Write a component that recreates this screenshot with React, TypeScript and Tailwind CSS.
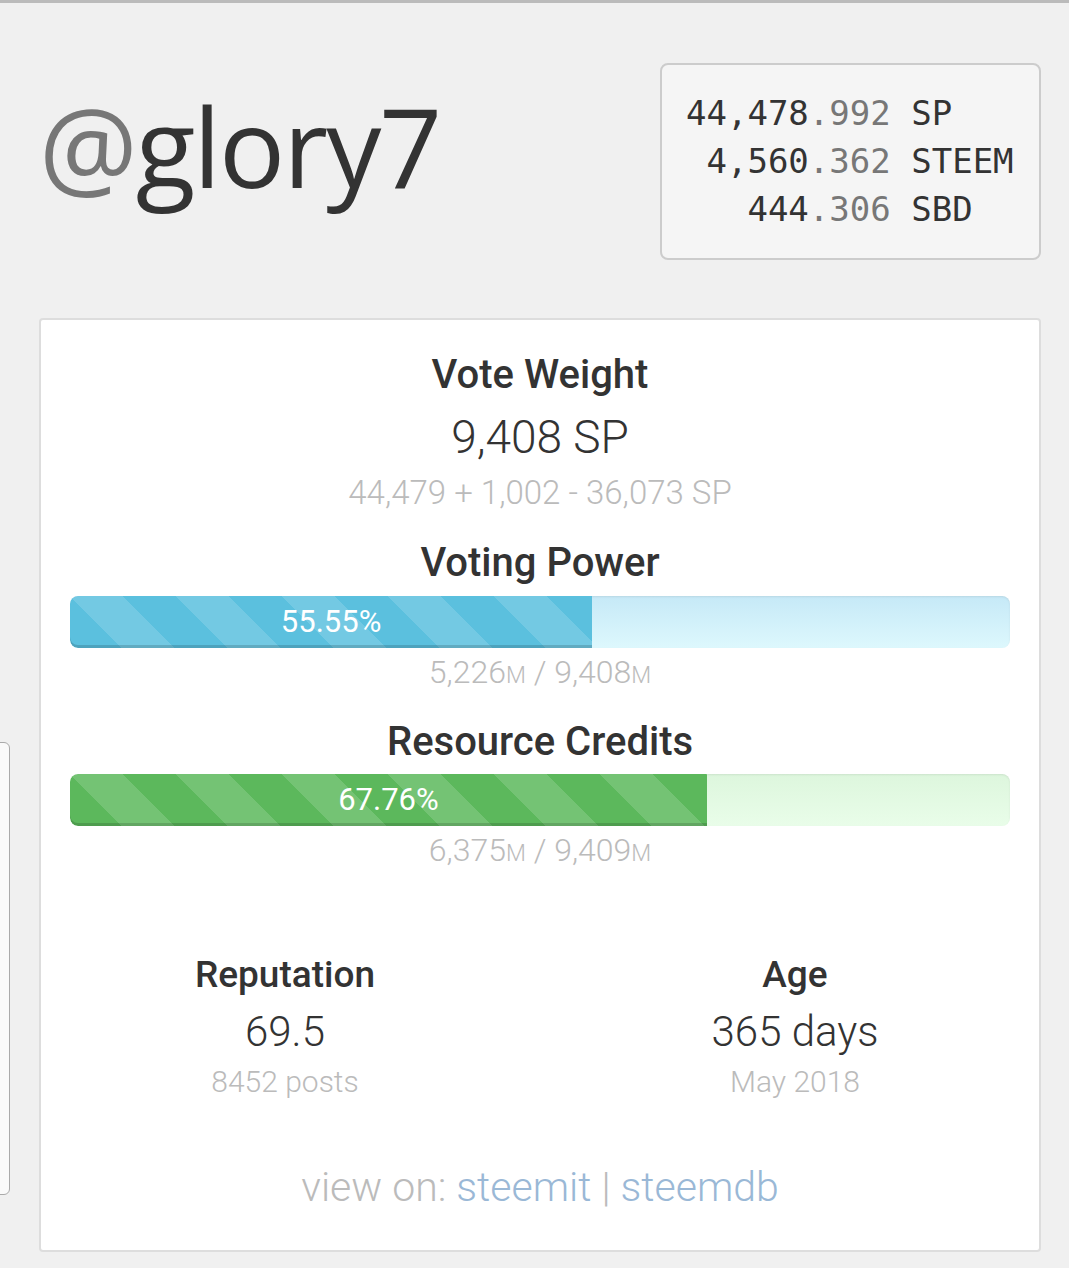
import React from 'react';

const stripes =
  'bg-[linear-gradient(45deg,rgba(255,255,255,.15)_25%,transparent_25%,transparent_50%,rgba(255,255,255,.15)_50%,rgba(255,255,255,.15)_75%,transparent_75%,transparent)] bg-[length:106px_106px]';

const Meter = ({ pct, fill, track }: { pct: number; fill: string; track: string }) => (
  <div className={`flex h-[52px] overflow-hidden rounded-[8px] shadow-[inset_0_1px_2px_rgba(0,0,0,0.08)] ${track}`}>
    <div
      className={`flex h-full items-center justify-center rounded-l-[8px] text-[31px] font-normal text-white shadow-[inset_0_-3px_0_rgba(0,0,0,0.15)] ${fill} ${stripes}`}
      style={{ width: `${pct}%` }}
    >
      {pct.toFixed(2)}%
    </div>
  </div>
);

const Mana = ({ cur, max }: { cur: string; max: string }) => (
  <div className="h-[48px] text-center text-[32px] font-light leading-[48px] text-[#bbb]">
    {cur}
    <span className="text-[23px]">M</span> / {max}
    <span className="text-[23px]">M</span>
  </div>
);

const balances = [
  { whole: '44,478', frac: '992', unit: 'SP', pad: '' },
  { whole: '4,560', frac: '362', unit: 'STEEM', pad: ' ' },
  { whole: '444', frac: '306', unit: 'SBD', pad: '   ' },
];

export default function App() {
  return (
    <div className="relative min-h-[1268px] border-t-[3px] border-[#bbb] bg-[#f0f0f0] font-['Roboto',sans-serif] text-[#333]">
      <div className="flex items-start justify-between pl-[39px] pr-[28px] pt-[60px]">
        <h1 className="mt-[27px] font-['Open_Sans',sans-serif] text-[110px] font-normal leading-none tracking-[-2px]">
          <span className="text-[#777]">@</span>glory7
        </h1>
        <div className="w-[381px] rounded-[8px] border-2 border-[#ccc] bg-[#f5f5f5] pb-[25px] pl-[24px] pt-[24px]">
          <pre className="font-['DejaVu_Sans_Mono',monospace] text-[34px] leading-[48px] text-[#333]">
            {balances.map((b) => (
              <div key={b.unit}>
                {b.pad}
                {b.whole}
                <span className="text-[#777]">.{b.frac}</span> {b.unit}
              </div>
            ))}
          </pre>
        </div>
      </div>

      {/* neighbouring card peeking in from the left */}
      <div className="absolute -left-[20px] top-[739px] h-[453px] w-[30px] rounded-[6px] border border-[#aaa] bg-[#fafafa]" />

      <div className="ml-[39px] mr-[28px] mt-[58px] rounded-[4px] border-2 border-[#ddd] bg-white pb-[38px] pt-[24px]">
        <div className="px-[29px] text-center">
          <h2 className="text-[40px] font-medium leading-[62px]">Vote Weight</h2>
          <div className="text-[46px] font-light leading-[62px]">9,408 SP</div>
          <div className="text-[33px] font-light leading-[50px] text-[#bbb]">44,479 + 1,002 - 36,073 SP</div>

          <h2 className="mt-[20px] text-[40px] font-medium leading-[50px]">Voting Power</h2>
          <div className="mt-[8px]">
            <Meter
              pct={55.55}
              fill="bg-[#5bc0de]"
              track="bg-gradient-to-b from-[#c6e9f7] to-[#ddf8fd]"
            />
          </div>
          <Mana cur="5,226" max="9,408" />

          <h2 className="mt-[21px] text-[40px] font-medium leading-[50px]">Resource Credits</h2>
          <div className="mt-[7px]">
            <Meter
              pct={67.76}
              fill="bg-[#5cb85c]"
              track="bg-gradient-to-b from-[#ddf6dd] to-[#e9fde9]"
            />
          </div>
          <Mana cur="6,375" max="9,409" />
        </div>

        <div className="mt-[76px] grid grid-cols-2 gap-[22px] text-center">
          <div>
            <h3 className="text-[37px] font-medium leading-[50px]">Reputation</h3>
            <div className="text-[42px] font-light leading-[64px]">69.5</div>
            <div className="text-[30px] font-light leading-[36px] text-[#bbb]">8452 posts</div>
          </div>
          <div>
            <h3 className="text-[37px] font-medium leading-[50px]">Age</h3>
            <div className="text-[42px] font-light leading-[64px]">365 days</div>
            <div className="text-[30px] font-light leading-[36px] text-[#bbb]">May 2018</div>
          </div>
        </div>

        <div className="mt-[62px] text-center text-[41px] font-light leading-[50px] text-[#bbb]">
          view on: <a className="text-[#9ab8d6]">steemit</a> | <a className="text-[#9ab8d6]">steemdb</a>
        </div>
      </div>
    </div>
  );
}
